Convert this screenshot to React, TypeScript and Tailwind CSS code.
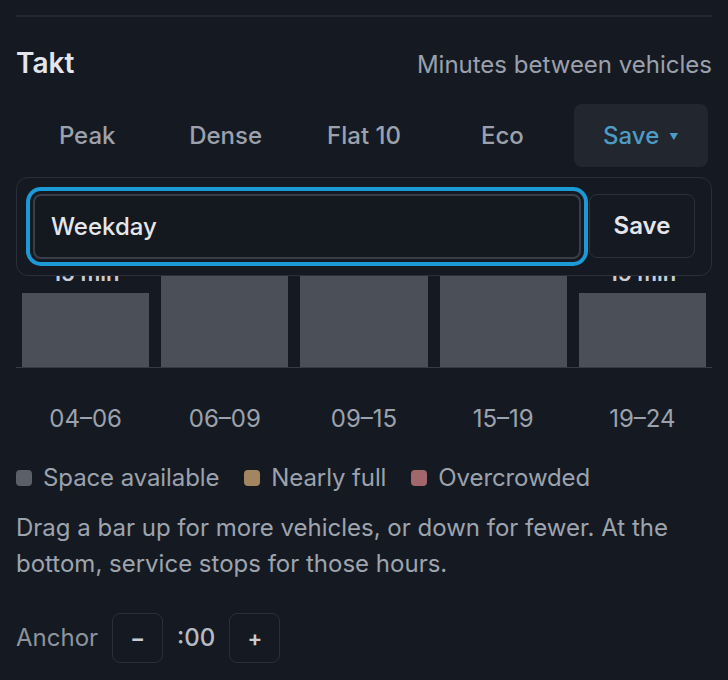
import { useState } from 'react';

// Five time bands of the service day, with the takt in minutes
interface Band {
  hours: string;
  minutes: number;
  height: number;
}

const BANDS: Band[] = [
  { hours: '04–06', minutes: 15, height: 74 },
  { hours: '06–09', minutes: 5, height: 150 },
  { hours: '09–15', minutes: 10, height: 130 },
  { hours: '15–19', minutes: 5, height: 150 },
  { hours: '19–24', minutes: 15, height: 74 },
];

const PRESETS = ['Peak', 'Dense', 'Flat 10', 'Eco'];

export default function App() {
  const [name, setName] = useState('Weekday');
  const [anchor, setAnchor] = useState(0);

  return (
    <div className="min-h-[680px] w-full bg-[#151a22] px-4 pt-[15px] font-['Inter','Noto_Sans',sans-serif] text-[24px]">
      <div className="h-[2px] bg-[#252a32]" />

      {/* Header */}
      <div className="mt-[28px] flex items-baseline justify-between leading-[36px]">
        <h2 className="text-[28px] font-semibold text-[#e4e6eb]">Takt</h2>
        <span className="text-[#9ba1ac]">Minutes between vehicles</span>
      </div>

      {/* Preset tabs */}
      <div className="mt-[21px] grid grid-cols-5 gap-1 px-1">
        {PRESETS.map((p) => (
          <button key={p} className="flex h-[63px] items-center justify-center rounded-lg font-medium text-[#9ca2ad]">
            {p}
          </button>
        ))}
        <button className="flex h-[63px] items-center justify-center gap-[10px] rounded-lg bg-[#22262e] font-medium text-[#4d9cc4]">
          Save
          <span className="mt-[2px] text-[9px] leading-none">▼</span>
        </button>
      </div>

      {/* Chart with the save popover over it */}
      <div className="relative mt-[10px] h-[191px] border-b border-[#373b44]">
        <div className="flex h-full items-end gap-3 px-[6px]">
          {BANDS.map((b) => (
            <div key={b.hours} className="flex flex-1 flex-col items-center justify-end">
              <span className="mb-[6px] text-[22px] font-semibold leading-[28px] text-[#c9cdd4]">{b.minutes} min</span>
              <div className="w-full bg-[#4b4f58]" style={{ height: b.height }} />
            </div>
          ))}
        </div>

        <div className="absolute left-0 right-0 top-0 flex gap-2 rounded-xl border border-[#2a2f37] bg-[#151a22] p-4">
          <input
            value={name}
            onChange={(e) => setName(e.target.value)}
            className="h-[65px] min-w-0 flex-1 rounded-lg border-2 border-[#383d47] bg-[#141920] px-4 font-medium text-[#e4e6eb] outline-none ring-[4px] ring-[#1b9ad6] ring-offset-[3px] ring-offset-[#151a22]"
          />
          <button className="h-[64px] w-[106px] rounded-lg border border-[#2c3139] font-semibold text-[#e4e6eb]">Save</button>
        </div>
      </div>

      {/* Hour labels */}
      <div className="mt-[35px] flex gap-3 px-[6px] leading-[32px] text-[#9ca2ad]">
        {BANDS.map((b) => (
          <span key={b.hours} className="flex-1 text-center">{b.hours}</span>
        ))}
      </div>

      {/* Legend */}
      <div className="mt-[27px] flex items-center gap-[25px] leading-[32px] tracking-[-0.1px] text-[#9ca2ad]">
        <span className="flex items-center gap-[11px]">
          <span className="h-4 w-4 rounded-[4px] bg-[#5b5f68]" />
          Space available
        </span>
        <span className="flex items-center gap-[11px]">
          <span className="h-4 w-4 rounded-[4px] bg-[#a3865f]" />
          Nearly full
        </span>
        <span className="flex items-center gap-[11px]">
          <span className="h-4 w-4 rounded-[4px] bg-[#a1676b]" />
          Overcrowded
        </span>
      </div>

      <p className="mt-[16px] leading-[36px] text-[#9ea4ae]">
        Drag a bar up for more vehicles, or down for fewer. At the bottom, service stops for those hours.
      </p>

      {/* Anchor minute */}
      <div className="mt-[31px] flex items-center gap-[14px]">
        <span className="text-[#8e949e]">Anchor</span>
        <button
          onClick={() => setAnchor((a) => (a + 59) % 60)}
          className="flex h-[50px] w-[51px] items-center justify-center rounded-lg border border-[#2b3038] text-[22px] font-semibold text-[#c9cdd4]"
        >
          −
        </button>
        <span className="font-medium text-[#b6bbc4]">:{String(anchor).padStart(2, '0')}</span>
        <button
          onClick={() => setAnchor((a) => (a + 1) % 60)}
          className="flex h-[50px] w-[51px] items-center justify-center rounded-lg border border-[#2b3038] text-[22px] font-semibold text-[#c9cdd4]"
        >
          +
        </button>
      </div>
    </div>
  );
}
